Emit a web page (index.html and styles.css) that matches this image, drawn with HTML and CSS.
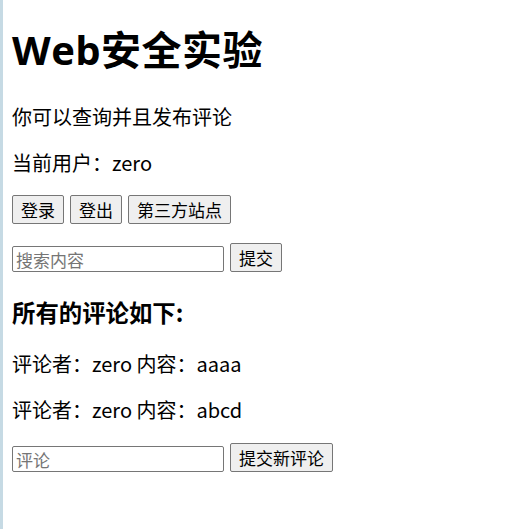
FILE: index.html
```html
<!DOCTYPE html>
<html lang="zh">
<head>
<meta charset="utf-8">
<title>Web安全实验</title>
<link rel="stylesheet" href="styles.css">
</head>
<body>
<div class="page">
  <h1 class="title">Web安全实验</h1>
  <p class="line">你可以查询并且发布评论</p>
  <p class="line">当前用户：zero</p>
  <div class="row">
    <button class="btn">登录</button>
    <button class="btn">登出</button>
    <button class="btn">第三方站点</button>
  </div>
  <form class="row form">
    <input class="field" type="text" placeholder="搜索内容">
    <button class="btn" type="button">提交</button>
  </form>
  <h3 class="subtitle">所有的评论如下:</h3>
  <p class="line">评论者：zero 内容：aaaa</p>
  <p class="line">评论者：zero 内容：abcd</p>
  <form class="row form">
    <input class="field" type="text" placeholder="评论">
    <button class="btn" type="button">提交新评论</button>
  </form>
</div>
</body>
</html>
```
FILE: styles.css
```css
html, body {
  margin: 0;
  padding: 0;
  background: #ffffff;
}
body {
  font-family: "Noto Sans CJK SC", "Noto Sans", sans-serif;
  color: #000;
}
.page {
  min-height: 529px;
  box-sizing: border-box;
  border-left: 3px solid #c6dae4;
  padding: 1px 0 0 9px;
}
.title {
  font-family: "Open Sans", "Noto Sans CJK SC", sans-serif;
  font-size: 40px;
  font-weight: 700;
  line-height: 48px;
  letter-spacing: 0.5px;
  margin: 25px 0 0 0;
}
.line {
  font-size: 20px;
  line-height: 26px;
  margin: 20px 0 0 0;
}
.title + .line {
  margin-top: 30px;
}
.row {
  display: flex;
  gap: 6px;
  align-items: flex-end;
  margin: 19px 0 0 0;
}
.form {
  margin-top: 19px;
}
.btn {
  font-family: "Noto Sans CJK SC", sans-serif;
  font-size: 17px;
  line-height: 22px;
  height: 29px;
  padding: 0 8px;
  background: #efefef;
  border: 1px solid #767676;
  border-radius: 2px;
  color: #000;
}
.field {
  font-family: "Noto Sans CJK SC", sans-serif;
  font-size: 17px;
  width: 212px;
  height: 26px;
  box-sizing: border-box;
  padding: 0 3px;
  border: 1px solid #767676;
  border-radius: 2px;
  margin-bottom: 0;
}
.field::placeholder {
  color: #757575;
}
.subtitle {
  font-size: 23.4px;
  font-weight: 700;
  line-height: 30px;
  margin: 25px 0 0 0;
}
.subtitle + .line {
  margin-top: 24px;
}
.subtitle ~ .form {
  margin-top: 20px;
}
```
